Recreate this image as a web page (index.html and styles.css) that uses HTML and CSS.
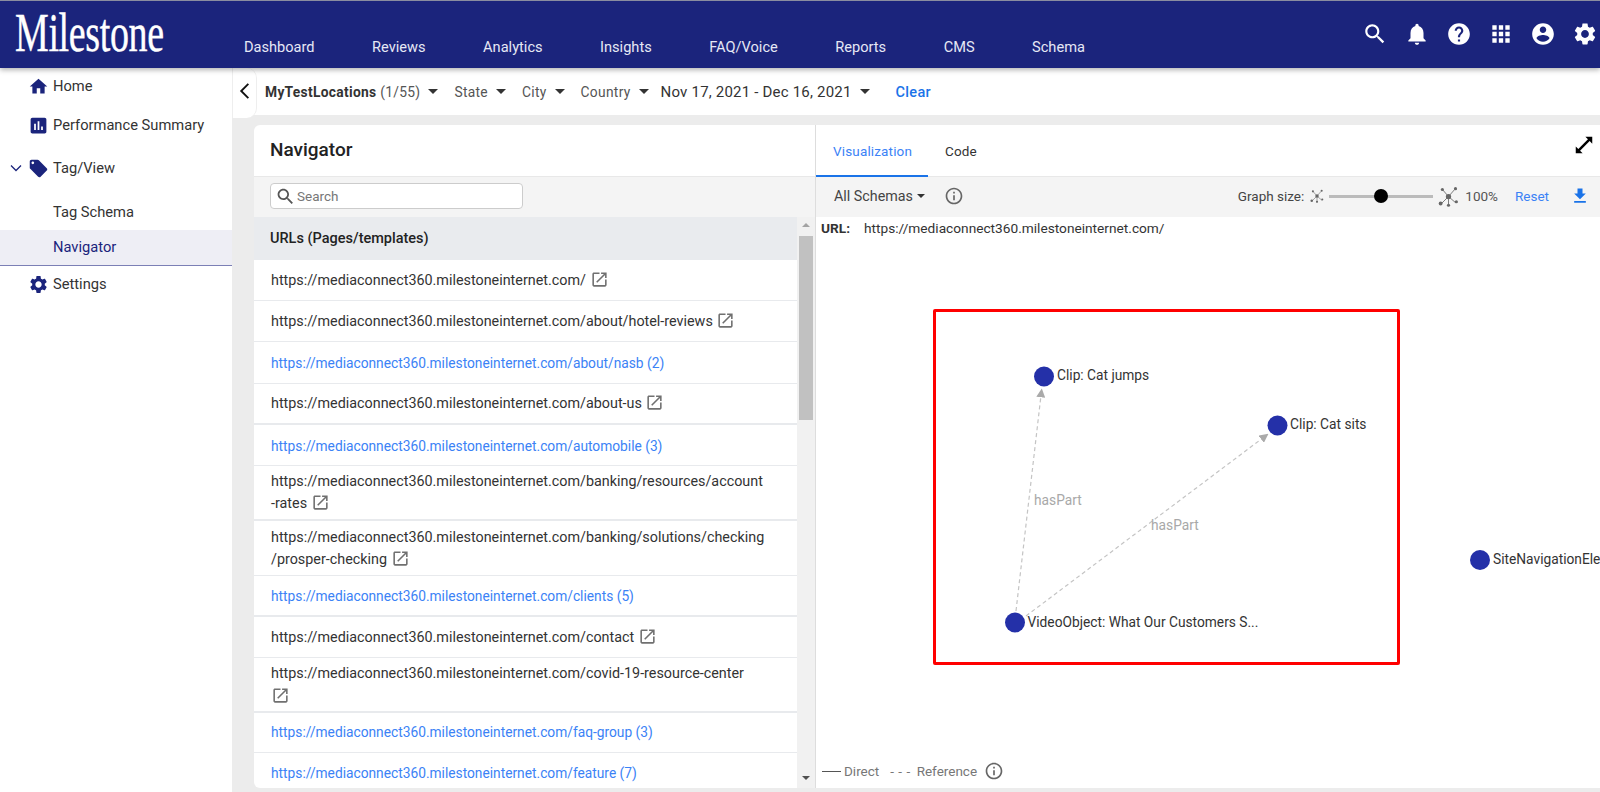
FILE: index.html
```html
<!DOCTYPE html>
<html lang="en">
<head>
<meta charset="utf-8">
<title>Milestone Navigator</title>
<link rel="stylesheet" href="styles.css">
</head>
<body>
<svg class="defs" width="0" height="0" aria-hidden="true">
  <symbol id="i-home" viewBox="0 0 24 24"><path d="M10 20v-6h4v6h5v-8h3L12 3 2 12h3v8z"/></symbol>
  <symbol id="i-chart" viewBox="0 0 24 24"><path d="M19 3H5c-1.1 0-2 .9-2 2v14c0 1.1.9 2 2 2h14c1.1 0 2-.9 2-2V5c0-1.1-.9-2-2-2zM9 17H7v-7h2v7zm4 0h-2V7h2v10zm4 0h-2v-4h2v4z"/></symbol>
  <symbol id="i-tag" viewBox="0 0 24 24"><path d="M21.41 11.58l-9-9C12.05 2.22 11.55 2 11 2H4c-1.1 0-2 .9-2 2v7c0 .55.22 1.05.59 1.42l9 9c.36.36.86.58 1.41.58.55 0 1.05-.22 1.41-.59l7-7c.37-.36.59-.86.59-1.41 0-.55-.23-1.06-.59-1.42zM5.5 7C4.67 7 4 6.33 4 5.5S4.67 4 5.5 4 7 4.67 7 5.5 6.33 7 5.5 7z"/></symbol>
  <symbol id="i-gear" viewBox="0 0 24 24"><path d="M19.14 12.94c.04-.3.06-.61.06-.94 0-.32-.02-.64-.07-.94l2.03-1.58c.18-.14.23-.41.12-.61l-1.92-3.32c-.12-.22-.37-.29-.59-.22l-2.39.96c-.5-.38-1.03-.7-1.62-.94l-.36-2.54c-.04-.24-.24-.41-.48-.41h-3.84c-.24 0-.43.17-.47.41l-.36 2.54c-.59.24-1.13.57-1.62.94l-2.39-.96c-.22-.08-.47 0-.59.22L2.74 8.87c-.12.21-.08.47.12.61l2.03 1.58c-.05.3-.09.63-.09.94s.02.64.07.94l-2.03 1.58c-.18.14-.23.41-.12.61l1.92 3.32c.12.22.37.29.59.22l2.39-.96c.5.38 1.03.7 1.62.94l.36 2.54c.05.24.24.41.48.41h3.84c.24 0 .44-.17.47-.41l.36-2.54c.59-.24 1.13-.56 1.62-.94l2.39.96c.22.08.47 0 .59-.22l1.92-3.32c.12-.22.07-.47-.12-.61l-2.01-1.58zM12 15.6c-1.98 0-3.6-1.62-3.6-3.6s1.62-3.6 3.6-3.6 3.6 1.62 3.6 3.6-1.62 3.6-3.6 3.6z"/></symbol>
  <symbol id="i-search" viewBox="0 0 24 24"><path d="M15.5 14h-.79l-.28-.27C15.41 12.59 16 11.11 16 9.5 16 5.91 13.09 3 9.5 3S3 5.91 3 9.5 5.91 16 9.5 16c1.61 0 3.09-.59 4.23-1.57l.27.28v.79l5 4.99L20.49 19l-4.99-5zm-6 0C7.01 14 5 11.99 5 9.5S7.01 5 9.5 5 14 7.01 14 9.5 11.99 14 9.5 14z"/></symbol>
  <symbol id="i-bell" viewBox="0 0 24 24"><path d="M12 22c1.1 0 2-.9 2-2h-4c0 1.1.89 2 2 2zm6-6v-5c0-3.07-1.64-5.64-4.5-6.32V4c0-.83-.67-1.5-1.5-1.5s-1.5.67-1.5 1.5v.68C7.63 5.36 6 7.92 6 11v5l-2 2v1h16v-1l-2-2z"/></symbol>
  <symbol id="i-help" viewBox="0 0 24 24"><path d="M12 2C6.48 2 2 6.48 2 12s4.48 10 10 10 10-4.48 10-10S17.52 2 12 2zm1 17h-2v-2h2v2zm2.07-7.75l-.9.92C13.45 12.9 13 13.5 13 15h-2v-.5c0-1.1.45-2.1 1.17-2.83l1.24-1.26c.37-.36.59-.86.59-1.41 0-1.1-.9-2-2-2s-2 .9-2 2H8c0-2.21 1.79-4 4-4s4 1.79 4 4c0 .88-.36 1.68-.93 2.25z"/></symbol>
  <symbol id="i-apps" viewBox="0 0 24 24"><path d="M4 8h4V4H4v4zm6 12h4v-4h-4v4zm-6 0h4v-4H4v4zm0-6h4v-4H4v4zm6 0h4v-4h-4v4zm6-10v4h4V4h-4zm-6 4h4V4h-4v4zm6 6h4v-4h-4v4zm0 6h4v-4h-4v4z"/></symbol>
  <symbol id="i-user" viewBox="0 0 24 24"><path d="M12 2C6.48 2 2 6.48 2 12s4.48 10 10 10 10-4.48 10-10S17.52 2 12 2zm0 3c1.66 0 3 1.34 3 3s-1.34 3-3 3-3-1.34-3-3 1.34-3 3-3zm0 14.2c-2.5 0-4.71-1.28-6-3.22.03-1.99 4-3.08 6-3.08 1.99 0 5.97 1.09 6 3.08-1.29 1.94-3.5 3.22-6 3.22z"/></symbol>
  <symbol id="i-open" viewBox="0 0 24 24"><path d="M19 19H5V5h7V3H5c-1.11 0-2 .9-2 2v14c0 1.1.89 2 2 2h14c1.1 0 2-.9 2-2v-7h-2v7zM14 3v2h3.59l-9.83 9.83 1.41 1.41L19 6.41V10h2V3h-7z"/></symbol>
  <symbol id="i-down" viewBox="0 0 24 24"><path d="M19 9h-4V3H9v6H5l7 7 7-7zM5 18v2h14v-2H5z"/></symbol>
  <symbol id="i-info" viewBox="0 0 24 24"><path d="M11 7h2v2h-2zm0 4h2v6h-2zm1-9C6.48 2 2 6.48 2 12s4.48 10 10 10 10-4.48 10-10S17.52 2 12 2zm0 18c-4.41 0-8-3.59-8-8s3.59-8 8-8 8 3.59 8 8-3.59 8-8 8z"/></symbol>
  <symbol id="i-expand" viewBox="0 0 24 24"><path d="M21 3h-7.5l2.8 2.8L5.8 16.3 3 13.5V21h7.5l-2.8-2.8L18.2 7.7 21 10.5z"/></symbol>
  <symbol id="i-graph" viewBox="0 0 24 24"><path d="M5 4l7 8 7-8M12 12l-8 8M12 12l8 7M12 12v9" fill="none" stroke="#777" stroke-width="1.1"/><circle cx="12" cy="12" r="3" fill="#666"/><circle cx="5" cy="4" r="1.8" fill="#666"/><circle cx="20" cy="3" r="1.8" fill="#666"/><circle cx="3" cy="20" r="2.2" fill="#666"/><circle cx="12" cy="22" r="1.8" fill="#666"/><circle cx="21" cy="18" r="1.8" fill="#666"/></symbol>
</svg>

<header class="topbar">
  <div class="logo-wrap"><span class="logo">Milestone</span></div>
  <nav class="mainnav">
    <a>Dashboard</a><a>Reviews</a><a>Analytics</a><a>Insights</a><a>FAQ/Voice</a><a>Reports</a><a>CMS</a><a>Schema</a>
  </nav>
  <div class="top-icons">
    <svg class="top-ic"><use href="#i-search"/></svg>
    <svg class="top-ic"><use href="#i-bell"/></svg>
    <svg class="top-ic"><use href="#i-help"/></svg>
    <svg class="top-ic"><use href="#i-apps"/></svg>
    <svg class="top-ic"><use href="#i-user"/></svg>
    <svg class="top-ic"><use href="#i-gear"/></svg>
  </div>
</header>

<div class="shell">
  <aside class="sidebar">
    <div class="side-row r38 up"><svg class="side-ic"><use href="#i-home"/></svg>Home</div>
    <div class="side-row r38"><svg class="side-ic"><use href="#i-chart"/></svg>Performance Summary</div>
    <div class="side-row r48">
      <svg class="chev" viewBox="0 0 12 8"><path d="M1 1.5l5 5 5-5" fill="none" stroke="#1b247c" stroke-width="1.3"/></svg>
      <svg class="side-ic"><use href="#i-tag"/></svg>Tag/View
    </div>
    <div class="side-sub r38 dn">Tag Schema</div>
    <div class="side-sub active">Navigator</div>
    <div class="side-row r36"><svg class="side-ic"><use href="#i-gear"/></svg>Settings</div>
  </aside>

  <main class="main">
    <div class="filterbar">
      <div class="backtab"><svg class="back" viewBox="0 0 10 16"><path d="M8.5 1.5L2 8l6.5 6.5" fill="none" stroke="#111" stroke-width="1.7"/></svg></div>
      <div class="filters">
        <span class="f f-loc"><b>MyTestLocations</b> (1/55)<i class="caret"></i></span>
        <span class="f f-sm">State<i class="caret"></i></span>
        <span class="f f-sm">City<i class="caret"></i></span>
        <span class="f f-sm">Country<i class="caret"></i></span>
        <span class="f f-date">Nov 17, 2021 - Dec 16, 2021<i class="caret"></i></span>
        <a class="clear">Clear</a>
      </div>
    </div>

    <div class="content">
      <section class="leftpanel">
        <h1 class="ptitle">Navigator</h1>
        <div class="searchbar">
          <div class="searchbox"><svg class="search-ic"><use href="#i-search"/></svg><span>Search</span></div>
        </div>
        <div class="listwrap">
          <div class="list">
            <div class="listhead">URLs (Pages/templates)</div>
            <div class="row"><span>https://mediaconnect360.milestoneinternet.com/ <svg class="ext"><use href="#i-open"/></svg></span></div>
            <div class="row"><span>https://mediaconnect360.milestoneinternet.com/about/hotel-reviews <svg class="ext"><use href="#i-open"/></svg></span></div>
            <div class="row link"><span>https://mediaconnect360.milestoneinternet.com/about/nasb (2)</span></div>
            <div class="row thick"><span>https://mediaconnect360.milestoneinternet.com/about-us <svg class="ext"><use href="#i-open"/></svg></span></div>
            <div class="row link"><span>https://mediaconnect360.milestoneinternet.com/automobile (3)</span></div>
            <div class="row two thick"><span>https://mediaconnect360.milestoneinternet.com/banking/resources/account<br>-rates <svg class="ext"><use href="#i-open"/></svg></span></div>
            <div class="row two"><span>https://mediaconnect360.milestoneinternet.com/banking/solutions/checking<br>/prosper-checking <svg class="ext"><use href="#i-open"/></svg></span></div>
            <div class="row link thick"><span>https://mediaconnect360.milestoneinternet.com/clients (5)</span></div>
            <div class="row"><span>https://mediaconnect360.milestoneinternet.com/contact <svg class="ext"><use href="#i-open"/></svg></span></div>
            <div class="row two thick"><span>https://mediaconnect360.milestoneinternet.com/covid-19-resource-center<br><svg class="ext"><use href="#i-open"/></svg></span></div>
            <div class="row link short"><span>https://mediaconnect360.milestoneinternet.com/faq-group (3)</span></div>
            <div class="row link last"><span>https://mediaconnect360.milestoneinternet.com/feature (7)</span></div>
          </div>
          <div class="scrollbar">
            <i class="sb-up"></i>
            <div class="sb-thumb"></div>
            <i class="sb-down"></i>
          </div>
        </div>
      </section>

      <section class="rightpanel">
        <div class="tabs">
          <a class="tab on">Visualization</a>
          <a class="tab">Code</a>
          <svg class="expand"><use href="#i-expand"/></svg>
        </div>
        <div class="toolbar">
          <span class="schemas">All Schemas<i class="caret small"></i></span>
          <svg class="info"><use href="#i-info"/></svg>
          <div class="graphctl">
            <span class="gs-label">Graph size:</span>
            <svg class="g-small"><use href="#i-graph"/></svg>
            <div class="slider"><i class="knob"></i></div>
            <svg class="g-big"><use href="#i-graph"/></svg>
            <span class="pct">100%</span>
            <a class="reset">Reset</a>
            <svg class="dl"><use href="#i-down"/></svg>
          </div>
        </div>
        <div class="canvas">
          <div class="urlline"><b>URL:</b><span>https://mediaconnect360.milestoneinternet.com/</span></div>
          <svg class="graph" width="784" height="572" viewBox="0 0 784 572">
            <defs>
              <marker id="arrow" viewBox="0 0 10 10" refX="9" refY="5" markerWidth="9" markerHeight="9" markerUnits="userSpaceOnUse" orient="auto"><path d="M0 0L10 5 0 10z" fill="#aaa"/></marker>
            </defs>
            <line class="edge" x1="200" y1="394" x2="225.7" y2="172.3" marker-end="url(#arrow)"/>
            <line class="edge" x1="210" y1="399" x2="451.7" y2="217.3" marker-end="url(#arrow)"/>
            <text class="elabel" x="218" y="288">hasPart</text>
            <text class="elabel" x="335" y="313">hasPart</text>
            <circle class="node" cx="228" cy="159.5" r="10"/>
            <circle class="node" cx="461.5" cy="208.5" r="10"/>
            <circle class="node" cx="199" cy="405.5" r="10"/>
            <circle class="node" cx="664" cy="343" r="10"/>
            <text class="nlabel" x="241" y="163">Clip: Cat jumps</text>
            <text class="nlabel" x="474" y="212">Clip: Cat sits</text>
            <text class="nlabel" x="211.5" y="410">VideoObject: What Our Customers S...</text>
            <text class="nlabel" x="677" y="347">SiteNavigationElement: Main</text>
          </svg>
          <div class="redbox"></div>
          <div class="legend">
            <i class="l-solid"></i><span>Direct</span>
            <span class="l-dash">- - -</span><span>Reference</span>
            <svg class="info"><use href="#i-info"/></svg>
          </div>
        </div>
      </section>
    </div>
  </main>
</div>
</body>
</html>
```
FILE: styles.css
```css
* { box-sizing: border-box; }
html, body { margin: 0; height: 792px; overflow: hidden; }
body { display: flex; flex-direction: column; font-family: Roboto, "Liberation Sans", sans-serif; color: #333; background: #fff; }
.defs { position: absolute; }

/* top bar */
.topbar { height: 68px; flex: none; display: flex; background: #1b247c; border-top: 1px solid #8a8da0; box-shadow: 0 2px 5px rgba(0,0,0,.3); position: relative; z-index: 5; }
.logo-wrap { width: 244px; flex: none; padding: 6px 0 0 15px; overflow: hidden; }
.logo { display: block; font: 400 55px/52px "Liberation Serif", serif; color: #fff; transform: scaleX(.69); transform-origin: left top; white-space: nowrap; letter-spacing: -.5px; -webkit-text-stroke: .4px #fff; }
.mainnav { display: flex; gap: 57.5px; padding-top: 36px; font-size: 14.6px; line-height: 20px; color: #e6e8f5; }
.top-icons { margin-left: auto; display: flex; gap: 16px; padding: 20px 2px 0 0; }
.top-ic { width: 26px; height: 26px; fill: #fff; }

/* shell */
.shell { flex: 1; min-height: 0; display: flex; }
.sidebar { width: 232px; flex: none; background: #fff; font-size: 14.7px; color: #333; }
.side-row, .side-sub { display: flex; align-items: center; }
.side-row { padding-left: 28px; }
.side-sub { padding-left: 53px; }
.r38 { height: 38px; }
.r48 { height: 48px; }
.r36 { height: 36px; }
.up { padding-bottom: 2px; }
.dn { padding-top: 2px; }
.side-ic { width: 21px; height: 21px; fill: #1b247c; margin-right: 4px; flex: none; }
.chev { width: 12px; height: 8px; margin: 0 6px 0 -18px; flex: none; }
.side-sub.active { height: 36px; background: #eeeef5; border-bottom: 1px solid #7b7fb5; color: #1b247c; padding-bottom: 1px; }

/* main */
.main { flex: 1; min-width: 0; display: flex; flex-direction: column; background: #ececec; }
.filterbar { height: 47px; flex: none; display: flex; align-items: center; background: #fff; position: relative; }
.backtab { width: 25px; height: 50px; align-self: flex-start; display: flex; align-items: center; justify-content: center; background: #fff; border-right: 1px solid #eee; border-left: 1px solid #eee; border-radius: 0 10px 10px 0; padding-bottom: 4px; flex: none; position: relative; z-index: 1; }
.back { width: 11px; height: 18px; }
.filters { display: flex; align-items: center; padding-left: 8px; color: #555; }
.f { display: inline-flex; align-items: center; white-space: pre; }
.f-loc { font-size: 13.8px; letter-spacing: .3px; margin-right: 16px; }
.f-loc b { font-weight: 700; color: #333; }
.f-sm { font-size: 13.8px; letter-spacing: .3px; margin-right: 16px; }
.f-sm:nth-child(4) { margin-right: 12px; }
.f-date { font-size: 15px; letter-spacing: .2px; color: #333; }
.caret { display: inline-block; width: 0; height: 0; border: 5px solid transparent; border-top: 5px solid #333; border-bottom: 0; margin-left: 8px; }
.caret.small { border-width: 4px 4px 0; margin-left: 4px; }
.clear { margin-left: 26px; padding-top: 1px; font-size: 14.5px; font-weight: 500; color: #1a73e8; letter-spacing: .3px; }

.content { flex: 1; min-height: 0; display: flex; padding: 10px 0 4px 22px; }
.leftpanel { width: 562px; flex: none; display: flex; flex-direction: column; background: #fff; border-radius: 6px 0 0 6px; border-right: 1px solid #ddd; overflow: hidden; }
.ptitle { margin: 0; height: 52px; padding-left: 16px; font-size: 19px; font-weight: 500; line-height: 49px; color: #222; border-bottom: 1px solid #e8e8e8; flex: none; }
.searchbar { height: 40px; flex: none; background: #f4f4f4; padding: 6px 0 0 16px; }
.searchbox { width: 253px; height: 26px; display: flex; align-items: center; background: #fff; border: 1px solid #ccc; border-radius: 4px; padding-left: 4px; font-size: 13.5px; color: #777; }
.search-ic { width: 21px; height: 21px; fill: #555; margin-right: 1px; }

.listwrap { flex: 1; min-height: 0; display: flex; }
.list { flex: 1; min-width: 0; overflow: hidden; font-size: 14.35px; line-height: 22.4px; }
.listhead { height: 43px; display: flex; align-items: center; padding: 2px 0 0 16px; background: #e9ebee; font-weight: 500; font-size: 14.5px; color: #222; }
.row { min-height: 41.2px; display: flex; align-items: center; padding: 2px 17px 0; border-bottom: 1px solid #e8eaed; color: #333; }
.row.two { min-height: 55px; }
.row.thick { border-bottom-width: 2px; }
.row.link { color: #3b82f6; font-size: 13.75px; }
.row.short { min-height: 39.5px; padding-top: 0; }
.row.last { border-bottom: 0; padding-top: 0; }
.ext { width: 19px; height: 19px; fill: #707070; vertical-align: -4px; }
.scrollbar { width: 18px; flex: none; background: #f1f1f1; display: flex; flex-direction: column; align-items: center; padding-top: 6px; }
.sb-up, .sb-down { width: 0; height: 0; border: 4.5px solid transparent; }
.sb-up { border-bottom: 4px solid #a3a3a3; border-top: 0; }
.sb-down { border-top: 4px solid #505050; border-bottom: 0; margin-top: auto; margin-bottom: 8px; }
.sb-thumb { width: 14px; height: 184px; background: #c1c1c1; margin-top: 9px; }

/* right */
.rightpanel { flex: 1; min-width: 0; display: flex; flex-direction: column; background: #fff; }
.tabs { height: 52px; flex: none; display: flex; border-bottom: 1px solid #e8e8e8; font-size: 13.5px; position: relative; }
.tab { padding: 0 16px 0 17px; line-height: 52px; color: #333; letter-spacing: .15px; }
.tab.on { color: #3b82f6; box-shadow: inset 0 -2px 0 #1a73e8; height: 52px; }
.expand { width: 22px; height: 22px; fill: #000; margin: 9px 5px 0 auto; }
.toolbar { height: 40px; flex: none; display: flex; align-items: center; background: #f4f4f4; padding: 0 0 2px 18px; font-size: 13.5px; color: #444; }
.schemas { display: inline-flex; align-items: center; margin-right: 19px; font-size: 14.3px; }
.info { width: 20px; height: 20px; fill: #666; flex: none; }
.graphctl { margin-left: auto; display: flex; align-items: center; padding-right: 10px; }
.gs-label { margin-right: 3px; }
.g-small { width: 14px; height: 14px; margin: 0 5px 0 3px; fill: none; }
.slider { width: 104px; height: 3px; background: #bbb; position: relative; }
.knob { position: absolute; left: 45px; top: -5.5px; width: 14px; height: 14px; border-radius: 50%; background: #000; }
.g-big { width: 21px; height: 21px; margin: 0 6px 0 5px; fill: none; }
.pct { color: #555; margin-right: 17px; }
.reset { color: #3b82f6; margin-right: 21px; }
.dl { width: 20px; height: 20px; fill: #1a73e8; }

.canvas { flex: 1; min-height: 0; position: relative; overflow: hidden; }
.urlline { display: flex; padding: 2px 0 0 5px; font-size: 13.7px; line-height: 18px; color: #333; }
.urlline b { width: 43px; font-weight: 700; }
.graph { position: absolute; left: 0; top: 0; }
.edge { stroke: #c4c4c4; stroke-width: 1.2; stroke-dasharray: 4 3; }
.node { fill: #2430a8; }
.nlabel { font-size: 13.75px; fill: #333; font-family: Roboto, sans-serif; }
.elabel { font-size: 13.75px; fill: #a8a8a8; font-family: Roboto, sans-serif; }
.redbox { position: absolute; left: 117px; top: 92px; width: 467px; height: 356px; border: 3px solid #f00; border-radius: 2px; }
.legend { position: absolute; left: 6px; bottom: 7px; display: flex; align-items: center; font-size: 13.5px; color: #777; }
.l-solid { width: 19px; height: 1px; background: #555; margin-right: 3px; }
.l-dash { margin: 0 6px 0 11px; letter-spacing: .5px; }
.legend .info { margin-left: 7px; }
```
